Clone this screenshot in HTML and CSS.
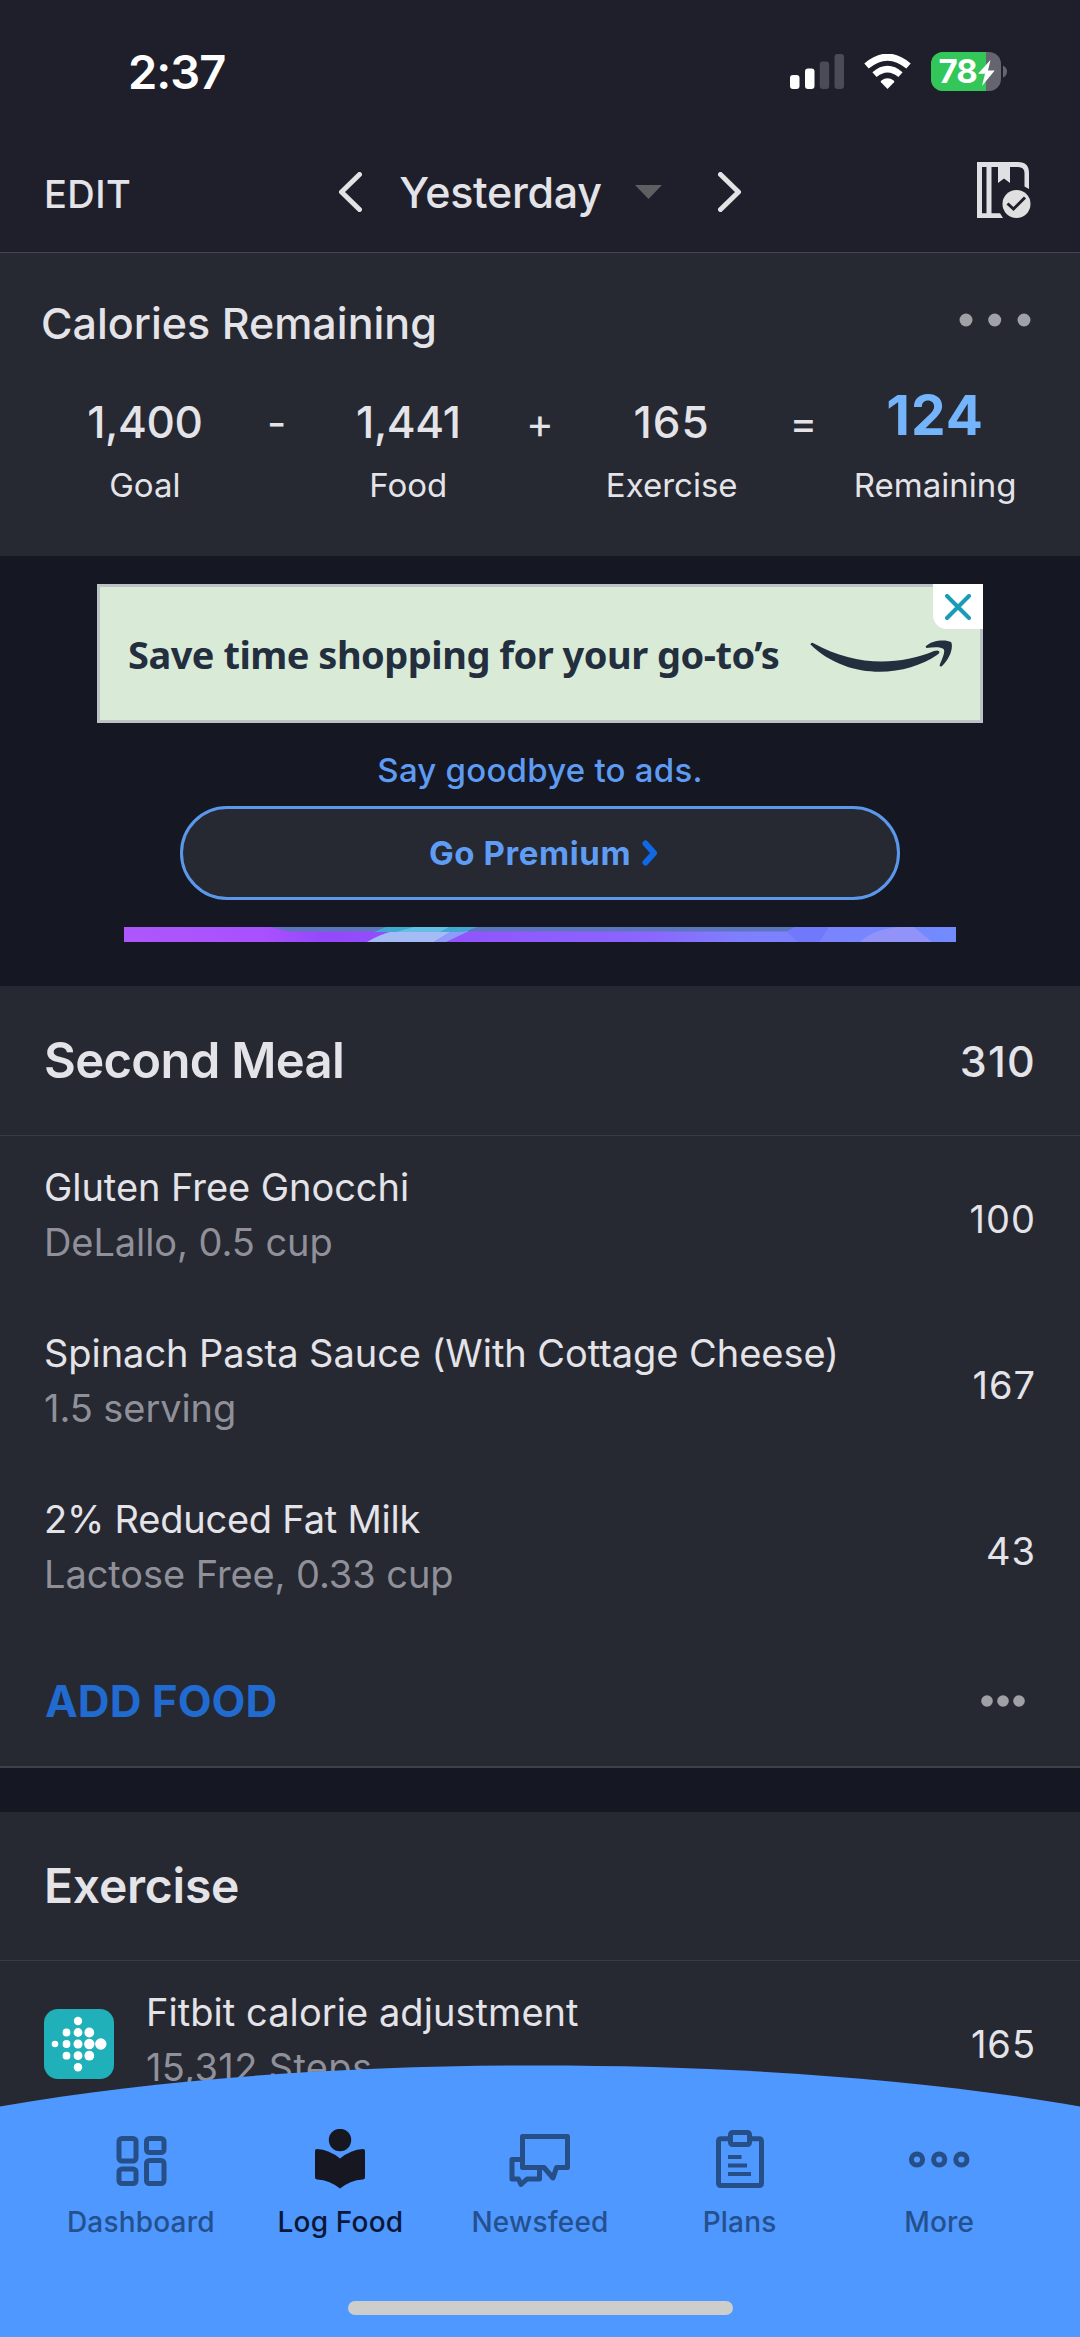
FILE: index.html
```html
<!DOCTYPE html>
<html lang="en">
<head>
<meta charset="utf-8">
<title>Food Diary</title>
<link rel="stylesheet" href="styles.css">
</head>
<body>
<div class="screen">
  <div class="status">
    <span class="clock">2:37</span>
    <div class="status-icons">
      <svg width="54" height="35" viewBox="0 0 54 35">
        <rect x="0" y="21" width="9.5" height="14" rx="3" fill="#fff"/>
        <rect x="15" y="14.5" width="9.5" height="20.5" rx="3" fill="#fff"/>
        <rect x="29.7" y="7.5" width="9.5" height="27.5" rx="3" fill="#494b57"/>
        <rect x="44.5" y="0" width="9.5" height="35" rx="3" fill="#494b57"/>
      </svg>
      <svg width="47" height="35" viewBox="0 0 47 35">
        <path d="M23.5 35 L17 28.3 Q16.2 27.3 17.3 26.4 Q23.5 22 29.7 26.4 Q30.8 27.3 30 28.3 Z" fill="#fff"/>
        <path d="M10.5 20.6 Q23.5 9.5 36.5 20.6" fill="none" stroke="#fff" stroke-width="6.5"/>
        <path d="M2.5 12 Q23.5 -5.8 44.5 12" fill="none" stroke="#fff" stroke-width="6.8"/>
      </svg>
      <svg width="76" height="39" viewBox="0 0 76 39">
        <defs><clipPath id="shell"><rect width="70" height="39" rx="12"/></clipPath></defs>
        <g clip-path="url(#shell)"><rect width="70" height="39" fill="#64656e"/><rect width="55" height="39" fill="#33c759"/></g>
        <path d="M72 13.5 Q76 15.5 76 19.5 Q76 23.5 72 25.5 Z" fill="#64656e"/>
        <text x="7.5" y="31.3" class="charge">78</text>
        <path d="M59.5 8 L47 21.8 H54 L51 34 L63.7 18.5 H57 Z" fill="#fff"/>
      </svg>
    </div>
  </div>

  <header class="header">
    <span class="edit">EDIT</span>
    <div class="date">
      <svg width="23" height="40" viewBox="0 0 23 40"><path d="M20.5 2.5 L2.5 20 L20.5 37.5" class="chev"/></svg>
      <span class="day">Yesterday</span>
      <svg class="caret" width="27" height="14" viewBox="0 0 27 14"><path d="M0 0 H27 L13.5 14 Z" fill="#5e5f60"/></svg>
      <svg width="23" height="40" viewBox="0 0 23 40"><path d="M2.5 2.5 L20.5 20 L2.5 37.5" class="chev"/></svg>
    </div>
    <svg class="journal" width="54" height="56" viewBox="0 0 54 56">
      <path d="M0 0 H41 Q52 0 52 11 V27 L47.5 24.5 V11 Q47.5 5 41 5 H33 V21 L27 16.5 L21 21 V5 H14.5 V51.3 H23 L26 56 H0 Z M5 5 V51.3 H9.5 V5 Z" fill="#dfe0e3" fill-rule="evenodd"/>
      <circle cx="39.5" cy="42" r="14" fill="#dfe0df"/>
      <path d="M30.5 41.5 L36.5 47 L48 35.5" fill="none" stroke="#1e1f2a" stroke-width="3"/>
    </svg>
  </header>

  <section class="summary">
    <div class="summary-top">
      <h1 class="summary-title">Calories Remaining</h1>
      <svg width="72" height="14" viewBox="0 0 72 14" fill="#a0a1a7"><circle cx="7" cy="7" r="6.5"/><circle cx="35.7" cy="7" r="6.5"/><circle cx="65" cy="7" r="6.5"/></svg>
    </div>
    <div class="equation">
      <div class="term"><span class="num">1,400</span><span class="cap">Goal</span></div>
      <span class="op">-</span>
      <div class="term"><span class="num">1,441</span><span class="cap">Food</span></div>
      <span class="op">+</span>
      <div class="term"><span class="num three">165</span><span class="cap">Exercise</span></div>
      <span class="op">=</span>
      <div class="term"><span class="num left">124</span><span class="cap">Remaining</span></div>
    </div>
  </section>

  <section class="promo">
    <div class="ad">
      <span class="ad-text">Save time shopping for your go-to’s</span>
      <svg class="smile" width="143" height="33" viewBox="0 0 143 33" fill="#232f3e">
        <path d="M.5 4.5 Q1 1.5 4 3.5 C44 26 88 26 124 11 Q129 9.5 129.5 12 Q129.5 13.5 127 15 C95 37 38 41 .5 4.5 Z"/>
        <path d="M115.5 6.5 C121 0 136 -1 141 2 C143.5 6 141 18 131.5 26.5 Q129 27 130 24 C133 17 135.5 11 133.5 9 C131 6.5 123 7 116.5 8 Z"/>
      </svg>
      <span class="close"><svg width="26" height="26" viewBox="0 0 26 26"><path d="M2 2 L24 24 M24 2 L2 24" fill="none" stroke="#1a9bb7" stroke-width="4" stroke-linecap="round"/></svg></span>
    </div>
    <p class="bye">Say goodbye to ads.</p>
    <a class="premium"><span>Go Premium</span><svg width="16" height="26" viewBox="0 0 16 26"><path d="M3.5 3.5 L12 13 L3.5 22.5" fill="none" stroke="#0f68e4" stroke-width="6" stroke-linecap="round" stroke-linejoin="round"/></svg></a>
    <svg class="strip" width="832" height="15" viewBox="0 0 832 15">
      <defs><linearGradient id="glow"><stop offset="0" stop-color="#ad57fb"/><stop offset=".17" stop-color="#a950ff"/><stop offset=".24" stop-color="#9448fb"/><stop offset=".5" stop-color="#8f5cff"/><stop offset=".63" stop-color="#8a66ff"/><stop offset=".74" stop-color="#7f7fff"/><stop offset="1" stop-color="#718bff"/></linearGradient></defs>
      <rect width="832" height="15" fill="url(#glow)"/>
      <path d="M147 0 H671 L663 4.5 H165 Z" fill="#5c76bd"/>
      <path d="M243 15 Q256 7 270 4 H328 L310 15 Z" fill="#a5bbf5"/>
      <path d="M310 15 L328 4 L345 4 L322 15 Z" fill="#8e9bfa"/>
      <path d="M262 0 H353 L340 5 H250 Z" fill="#42a9d3"/>
      <path d="M290 0 H325 L316 5 H272 Z" fill="#63bfe6"/>
      <path d="M663 4.5 L671 0 H705 L695 15 H674 Z" fill="#7079fc"/>
      <path d="M736 15 Q750 2 775 0 H790 L808 15 Z" fill="#9293f8"/>
    </svg>
  </section>

  <section class="card meal">
    <div class="card-head"><h2 class="meal-name">Second Meal</h2><span class="total">310</span></div>
    <div class="row"><div class="info"><span class="name">Gluten Free Gnocchi</span><span class="detail">DeLallo, 0.5 cup</span></div><span class="kcal">100</span></div>
    <div class="row"><div class="info"><span class="name">Spinach Pasta Sauce (With Cottage Cheese)</span><span class="detail">1.5 serving</span></div><span class="kcal">167</span></div>
    <div class="row"><div class="info"><span class="name tight">2% Reduced Fat Milk</span><span class="detail">Lactose Free, 0.33 cup</span></div><span class="kcal">43</span></div>
    <div class="actions">
      <a class="add">ADD FOOD</a>
      <svg class="more" width="44" height="12" viewBox="0 0 44 12" fill="#a0a1a7"><circle cx="6" cy="6" r="5.8"/><circle cx="22" cy="6" r="5.8"/><circle cx="38" cy="6" r="5.8"/></svg>
    </div>
  </section>

  <section class="card exercise">
    <div class="card-head"><h2>Exercise</h2></div>
    <div class="row">
      <svg class="fitbit" width="70" height="70" viewBox="0 0 70 70">
        <rect width="70" height="70" rx="14" fill="#1fb0b9"/>
        <g fill="#fff">
          <circle cx="11" cy="35" r="3.3"/>
          <circle cx="22.5" cy="23.5" r="3.9"/><circle cx="22.5" cy="35" r="3.9"/><circle cx="22.5" cy="46.7" r="3.9"/>
          <circle cx="34" cy="12" r="4.2"/><circle cx="34" cy="23.5" r="4.4"/><circle cx="34" cy="35" r="4.5"/><circle cx="34" cy="46.7" r="4.4"/><circle cx="34" cy="58.3" r="4.2"/>
          <circle cx="45.3" cy="23.5" r="4.9"/><circle cx="45.3" cy="35" r="5.2"/><circle cx="45.3" cy="46.7" r="4.9"/>
          <circle cx="56.8" cy="35" r="5.7"/>
        </g>
      </svg>
      <div class="info"><span class="name">Fitbit calorie adjustment</span><span class="detail">15,312 Steps</span></div><span class="kcal">165</span>
    </div>
  </section>

  <nav class="tabbar">
    <svg class="arc" width="1080" height="272" viewBox="0 0 1080 272"><path d="M0 41.5 C160 13.5 350 .5 540 .5 S920 13.5 1080 41.5 V272 H0 Z" fill="#4e98ff"/></svg>
    <div class="tabs">
      <a class="tab">
        <svg width="64" height="60" viewBox="0 0 64 60" class="line"><rect x="10" y="9.5" width="17" height="22.5" rx="3"/><rect x="37.5" y="9.5" width="17.5" height="14" rx="3"/><rect x="10" y="40" width="17" height="14.5" rx="3"/><rect x="37.5" y="31.5" width="17.5" height="23" rx="3"/></svg>
        <span>Dashboard</span>
      </a>
      <a class="tab active">
        <svg width="64" height="60" viewBox="0 0 64 60" fill="#171722"><circle cx="32" cy="11" r="11.2"/><path d="M7 22 Q7 20 9 20 Q21 20.5 32 29.5 Q43 20.5 55 20 Q57 20 57 22 V48 Q57 50.5 54.5 50.5 Q43 51 32 59.5 Q21 51 9.5 50.5 Q7 50.5 7 48 Z"/></svg>
        <span>Log Food</span>
      </a>
      <a class="tab">
        <svg width="64" height="60" viewBox="0 0 64 60" class="line"><path d="M14.5 7.5 H59.5 V38.5 H48.5 L45 49 L36 38.5 H14.5 Z"/><path d="M12 30.5 H4 V50 H10.5 L13 55.5 L19 50 H31.5 V41"/></svg>
        <span>Newsfeed</span>
      </a>
      <a class="tab">
        <svg width="64" height="60" viewBox="0 0 64 60" class="line"><path d="M20 9.7 H13 Q10.5 9.7 10.5 12.2 V54 Q10.5 56.5 13 56.5 H51 Q53.5 56.5 53.5 54 V12.2 Q53.5 9.7 51 9.7 H44"/><rect x="22.5" y="3.5" width="19" height="12" rx="2"/><path d="M20 28 H33.5 M20 36.5 H39 M20 45 H43" stroke-width="4"/></svg>
        <span>Plans</span>
      </a>
      <a class="tab">
        <svg width="64" height="60" viewBox="0 0 64 60" class="line"><circle cx="10" cy="30.5" r="5.6"/><circle cx="32.2" cy="30.5" r="5.6"/><circle cx="54.4" cy="30.5" r="5.6"/></svg>
        <span>More</span>
      </a>
    </div>
    <div class="home"></div>
  </nav>
</div>
</body>
</html>
```
FILE: styles.css
```css
* { box-sizing: border-box; }
body { margin: 0; background: #151722; font-family: Inter, "Liberation Sans", sans-serif; color: #e3e3e8; }
h1, h2, p { margin: 0; }
svg { display: block; flex: none; }

.screen { position: relative; width: 1080px; height: 2337px; overflow: hidden; background: #151722; }

.status { display: flex; justify-content: space-between; align-items: center; height: 134px; padding: 9px 73px 0 128px; background: #1e1f2a; color: #fff; }
.clock { font-size: 47px; font-weight: 600; letter-spacing: -1px; }
.status-icons { display: flex; align-items: center; gap: 20px; }
.charge { font-size: 33px; font-weight: 700; letter-spacing: -1px; fill: #fff; }

.header { display: grid; grid-template-columns: 1fr auto 1fr; align-items: center; height: 119px; padding: 0 49px 0 44px; background: #1e1f2a; border-bottom: 1px solid #42444e; }
.edit { font-size: 38px; font-weight: 500; letter-spacing: .44px; padding-top: 2px; }
.date { display: flex; align-items: center; margin-left: 5px; padding-bottom: 3px; }
.day { margin: 0 33px 0 37px; font-size: 43px; font-weight: 500; letter-spacing: -.28px; }
.caret { margin-right: 56px; }
.chev { fill: none; stroke: #e3e3e6; stroke-width: 5; stroke-linecap: round; stroke-linejoin: round; }
.journal { justify-self: end; margin-bottom: 6px; }

.summary { height: 303px; padding-top: 44px; background: #262832; }
.summary-top { display: flex; justify-content: space-between; align-items: center; height: 52px; padding: 0 49px 0 41px; }
.summary-top svg { margin-bottom: 6px; }
.summary-title { font-size: 43px; font-weight: 500; line-height: 52px; }
.equation { display: grid; grid-template-columns: repeat(7, minmax(0, 1fr)); justify-items: center; padding: 46px 79px 0; }
.term { display: flex; flex-direction: column; align-items: center; white-space: nowrap; }
.num { font-size: 44px; font-weight: 500; line-height: 54px; letter-spacing: -.4px; }
.num.three { letter-spacing: 1px; }
.num.left { margin-bottom: 14px; font-size: 55px; font-weight: 700; line-height: 40px; letter-spacing: 1px; color: #73b4fb; }
.cap { margin-top: 16px; font-size: 33px; line-height: 40px; }
.op { font-size: 42px; line-height: 56px; }

.promo { display: flex; flex-direction: column; align-items: center; height: 430px; padding-top: 28px; }
.ad { position: relative; display: flex; align-items: center; width: 886px; height: 139px; padding-left: 28px; background: #d9ebd7; border: 3px solid #bdc2c6; color: #232f3e; }
.ad-text { width: 682px; font-family: "Noto Sans", sans-serif; font-size: 38px; font-weight: 700; letter-spacing: -.51px; white-space: nowrap; }
.smile { margin-top: 5px; }
.close { position: absolute; top: -3px; right: -3px; display: grid; place-items: center; width: 50px; height: 45px; background: #fff; border-bottom-left-radius: 14px; }
.bye { margin-top: 27px; font-size: 33px; font-weight: 500; line-height: 40px; letter-spacing: .23px; color: #5e9bf3; }
.premium { display: flex; justify-content: center; align-items: center; gap: 11px; width: 720px; height: 94px; margin-top: 16px; padding-left: 7px; background: #262832; border: 3px solid #5b98ec; border-radius: 47px; font-size: 33px; font-weight: 700; letter-spacing: .6px; color: #5f9df4; }
.strip { margin-top: 27px; }

.card { background: #262832; }
.meal { border-bottom: 2px solid #3e404a; margin-bottom: 44px; }
.card-head { display: flex; justify-content: space-between; align-items: center; height: 150px; padding: 0 44px; border-bottom: 1px solid #393b45; }
.card-head h2 { font-size: 48px; font-weight: 600; letter-spacing: -.23px; }
.card-head .meal-name { font-size: 49px; letter-spacing: -.69px; }
.total { font-size: 43px; font-weight: 500; letter-spacing: 1.2px; padding-top: 1px; }
.row { display: flex; align-items: center; height: 166px; padding: 0 44px; }
.info { display: flex; flex-direction: column; height: 118px; margin-right: auto; font-size: 38px; line-height: 55px; white-space: nowrap; }
.detail { color: #8f9099; letter-spacing: -.08px; }
.name { letter-spacing: -.05px; }
.name.tight { letter-spacing: -.22px; }
.kcal { font-size: 38px; letter-spacing: 1px; }
.actions { display: flex; justify-content: space-between; align-items: center; height: 132px; padding: 2px 55px 0 45px; }
.add { font-size: 44px; font-weight: 700; color: #216acf; }
.exercise .card-head { height: 149px; padding-bottom: 2px; }
.exercise .detail { letter-spacing: .35px; }
.exercise .name { letter-spacing: .06px; }
.fitbit { margin-right: 32px; }

.tabbar { position: absolute; left: 0; bottom: 0; width: 1080px; height: 272px; }
.arc { position: absolute; inset: 0; }
.tabs { position: relative; display: grid; grid-template-columns: repeat(5, 1fr); padding: 64px 41px 0; }
.tab { display: flex; flex-direction: column; align-items: center; color: #25508e; }
.tab span { margin-top: 15px; font-size: 28px; font-weight: 500; line-height: 36px; letter-spacing: .2px; }
.tab.active { color: #0c1738; }
.line { fill: none; stroke: #264f88; stroke-width: 5; stroke-linejoin: round; }
.home { position: relative; width: 385px; height: 14px; margin: 61px auto 0; background: #cdcdcc; border-radius: 7px; }
```
